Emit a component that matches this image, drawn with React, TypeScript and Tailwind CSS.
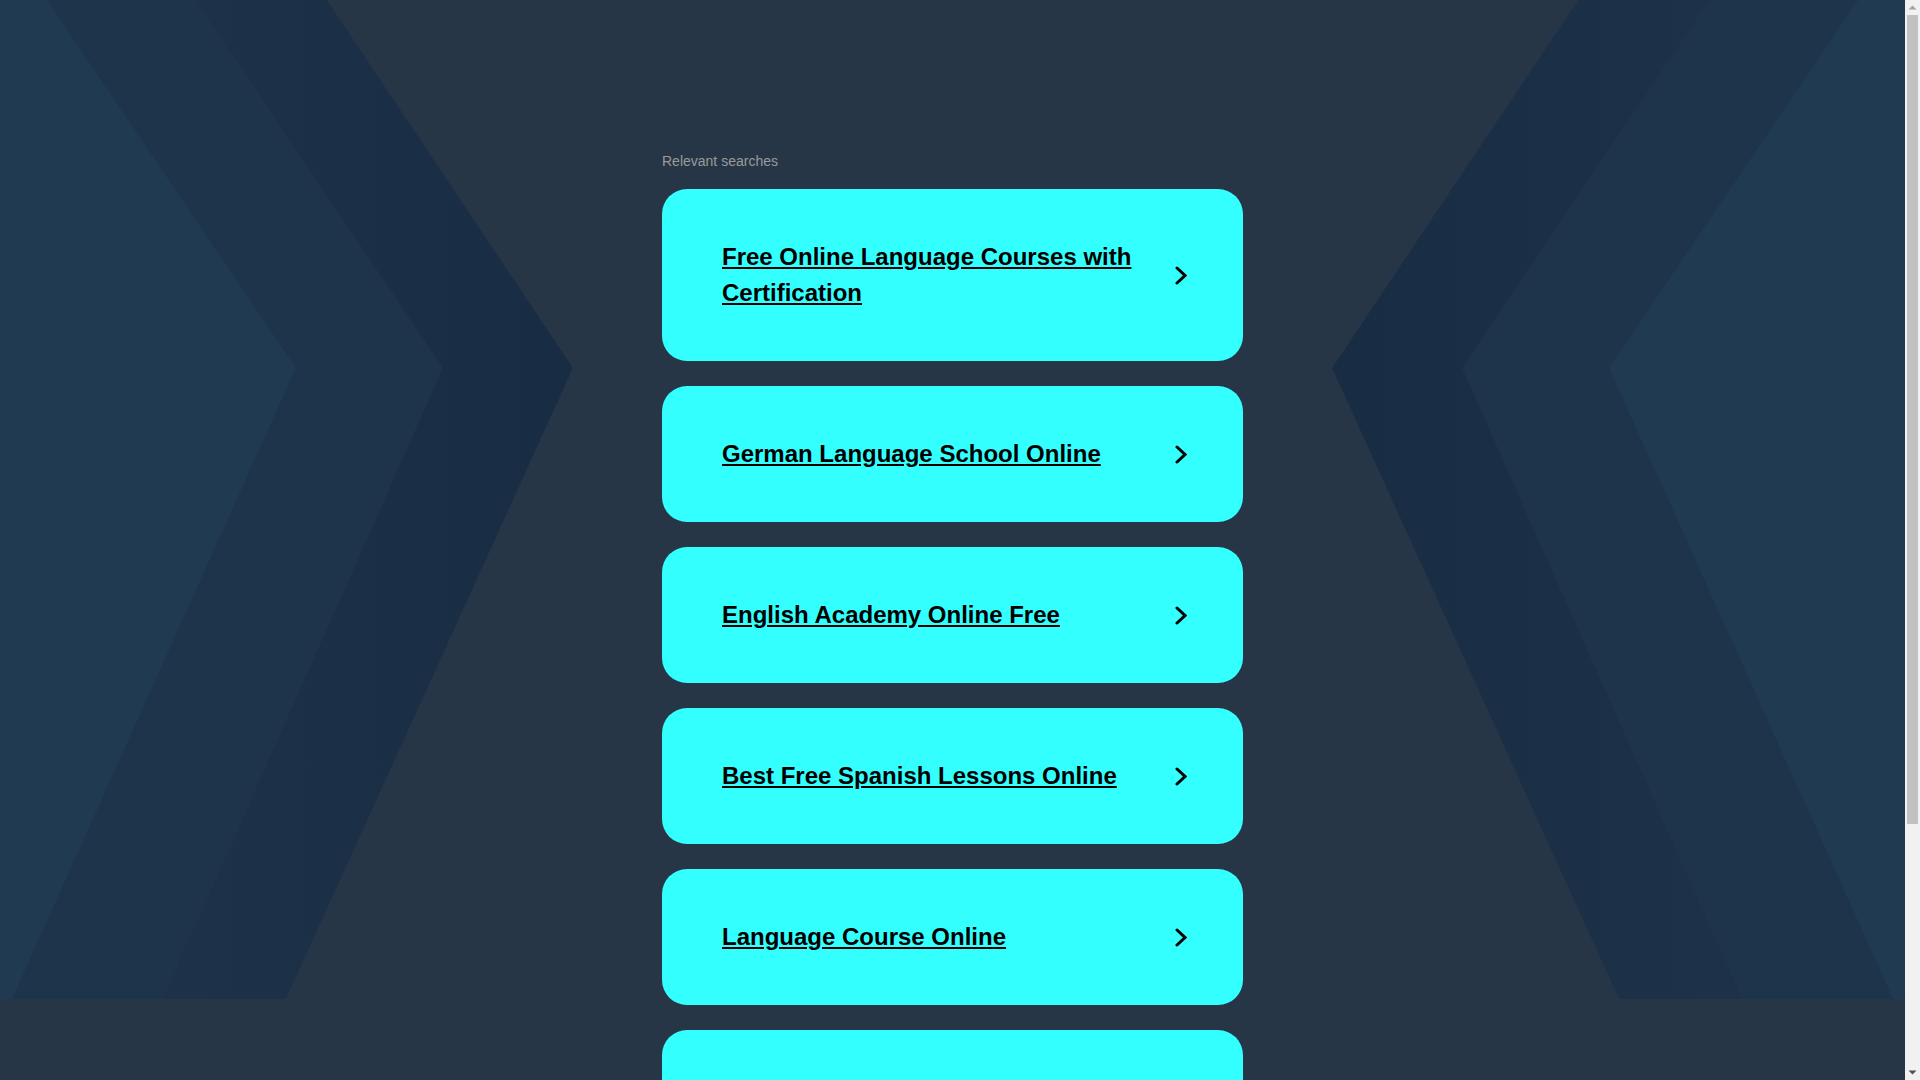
import React from "react"

const searches = [
  "Free Online Language Courses with Certification",
  "German Language School Online",
  "English Academy Online Free",
  "Best Free Spanish Lessons Online",
  "Language Course Online",
  "Learn French Online for Beginners",
  "Online Language Learning Platforms",
]

const W = 1905

function Backdrop() {
  // three nested chevrons on each side, mirrored around the centre
  const left = [
    { fill: "url(#outerL)", pts: [[0, 0], [327, 0], [573, 368], [286, 999], [0, 999]] },
    { fill: "#1e344b", pts: [[0, 0], [196, 0], [443, 368], [163, 999], [0, 999]] },
    { fill: "#203a51", pts: [[0, 0], [47, 0], [296, 368], [12, 999], [0, 999]] },
  ]
  const toStr = (p: number[][]) => p.map(([x, y]) => `${x},${y}`).join(" ")
  const mirror = (p: number[][]) => p.map(([x, y]) => [W - x, y])

  return (
    <svg
      className="absolute left-0 top-0 h-[999px] w-full"
      viewBox={`0 0 ${W} 999`}
      preserveAspectRatio="none"
      aria-hidden="true"
    >
      <defs>
        <linearGradient id="outerL" gradientUnits="userSpaceOnUse" x1="200" y1="0" x2="560" y2="0">
          <stop offset="0" stopColor="#1d3249" />
          <stop offset="1" stopColor="#182d43" />
        </linearGradient>
        <linearGradient id="outerR" gradientUnits="userSpaceOnUse" x1={W - 200} y1="0" x2={W - 560} y2="0">
          <stop offset="0" stopColor="#1d3249" />
          <stop offset="1" stopColor="#182d43" />
        </linearGradient>
      </defs>
      {left.map((s, i) => (
        <polygon key={"l" + i} points={toStr(s.pts)} fill={s.fill} />
      ))}
      {left.map((s, i) => (
        <polygon
          key={"r" + i}
          points={toStr(mirror(s.pts))}
          fill={i === 0 ? "url(#outerR)" : s.fill}
        />
      ))}
    </svg>
  )
}

function Chevron() {
  return (
    <svg width="12" height="19" viewBox="0 0 12 19" className="shrink-0">
      <path
        d="M2 2 L10 9.5 L2 17"
        fill="none"
        stroke="#000"
        strokeWidth="3"
        strokeLinecap="round"
      />
    </svg>
  )
}

function SearchCard({ label }: { label: string }) {
  return (
    <a
      href="#"
      className="flex items-center justify-between rounded-[25px] bg-[#33ffff] py-[50px] pl-[60px] pr-[56px]"
    >
      <span className="mr-[24px] text-[24px] font-bold leading-[36px] text-black underline">
        {label}
      </span>
      <Chevron />
    </a>
  )
}

function Scrollbar() {
  return (
    <div className="sticky top-0 flex h-screen w-[15px] shrink-0 flex-col items-center bg-[#f1f1f1]">
      <svg width="15" height="15" viewBox="0 0 15 15">
        <path d="M3.5 9.5 L7.5 5.5 L11.5 9.5 Z" fill="#a3a3a3" />
      </svg>
      <div className="h-[809px] w-[11px] bg-[#c1c1c1]" />
      <div className="flex-1" />
      <svg width="15" height="15" viewBox="0 0 15 15">
        <path d="M3.5 5.5 L7.5 9.5 L11.5 5.5 Z" fill="#505050" />
      </svg>
    </div>
  )
}

export default function App() {
  return (
    <div className="flex min-h-screen items-start bg-[#273647] font-['Liberation_Sans',Arial,sans-serif]">
      <div className="relative min-w-0 flex-1">
        <Backdrop />
        <main className="relative mx-auto w-[581px] pb-[75px] pt-[151px]">
          <div className="mb-[18px] text-[14px] leading-[20px] text-[#9a9a9a]">Relevant searches</div>
          <div className="flex flex-col gap-[25px]">
            {searches.map((s) => (
              <SearchCard key={s} label={s} />
            ))}
          </div>
        </main>
      </div>
      <Scrollbar />
    </div>
  )
}
